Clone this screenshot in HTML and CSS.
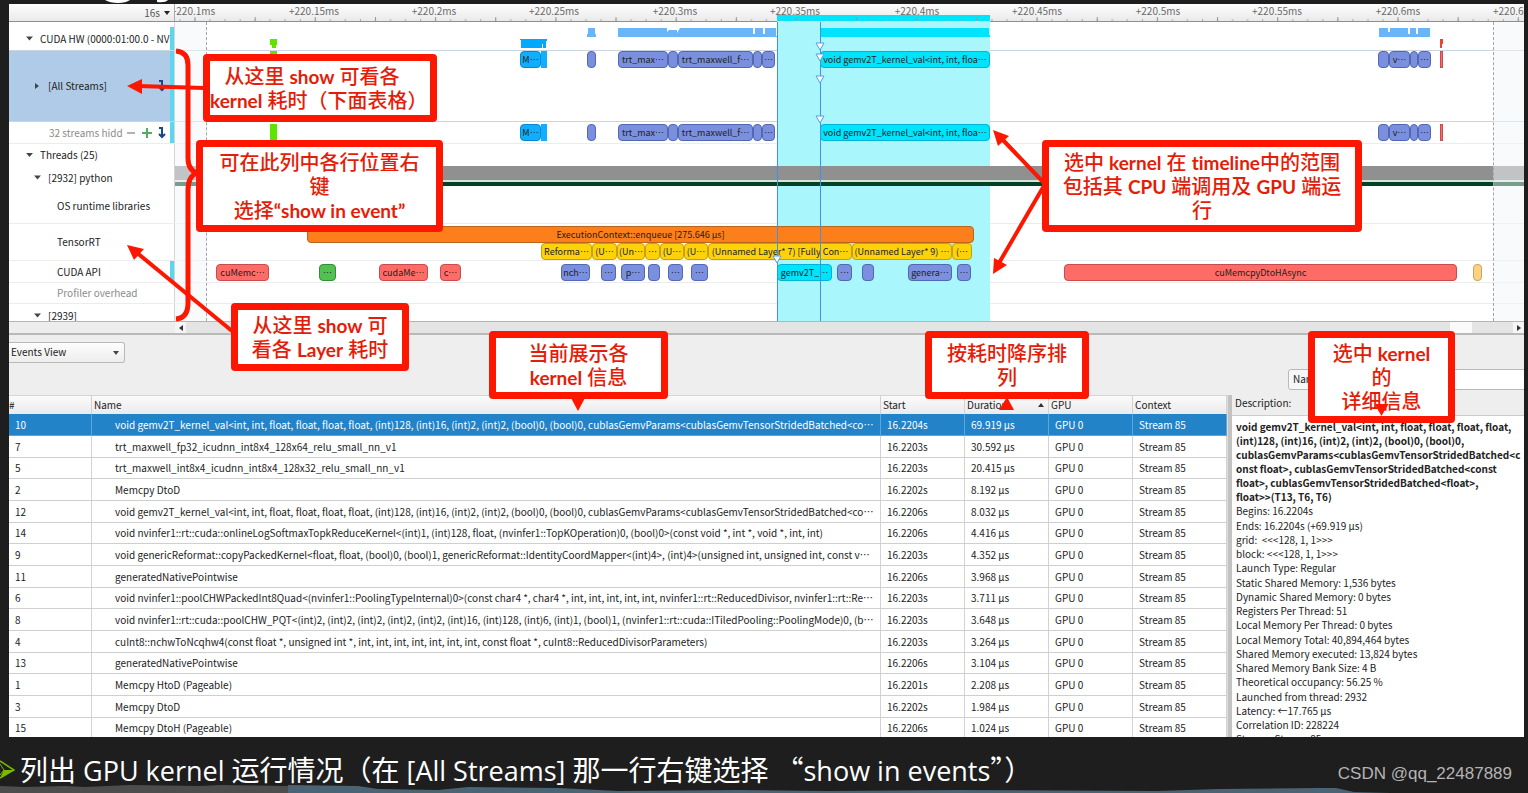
FILE: index.html
```html
<!DOCTYPE html>
<html lang="zh-CN">
<head>
<meta charset="utf-8">
<title>GPU kernel 运行情况</title>
<link rel="stylesheet" href="styles.css">
</head>
<body>
<main class="slide">
  <svg class="title-edge" viewBox="0 0 200 4" aria-hidden="true"><path d="M105 0h25q-4 3-12 3t-13-3zM157 0h11q-3 3-11 2z" fill="#fff"/></svg>

  <section class="app">
    <div class="timeline">
      <div class="row ruler">
        <div class="label"><button class="unit" type="button">16s <svg viewBox="0 0 6 4"><path d="M0 0h6L3 4z"/></svg></button></div>
        <div class="lane">
          <svg class="ticks" viewBox="0 0 1349 5" preserveAspectRatio="none" aria-hidden="true">
            <defs>
              <pattern id="tick" x="4.5" width="60.15" height="5" patternUnits="userSpaceOnUse"><path d="M15.5 3v2M30.5 3v2M45.5 3v2M.5 3v2" stroke="#aaa"/></pattern>
              <pattern id="major" x="19.5" width="60.15" height="5" patternUnits="userSpaceOnUse"><path d="M.5 1v4" stroke="#999"/></pattern>
            </defs>
            <rect width="1349" height="5" fill="url(#tick)"/><rect width="1349" height="5" fill="url(#major)"/>
          </svg>
          <span style="--x:18">+220.1ms</span><span style="--x:139">+220.15ms</span><span style="--x:259">+220.2ms</span><span style="--x:379">+220.25ms</span><span style="--x:500">+220.3ms</span><span style="--x:620">+220.35ms</span><span style="--x:742">+220.4ms</span><span style="--x:862">+220.45ms</span><span style="--x:983">+220.5ms</span><span style="--x:1102">+220.55ms</span><span style="--x:1223">+220.6ms</span><span style="--x:1343">+220.65ms</span>
        </div>
      </div>
      <div class="row sliver"><div class="label"></div><div class="lane"></div></div>
      <div class="row hw">
        <div class="label d1 strip"><i class="tri open"></i><span>CUDA HW (0000:01:00.0 - NV</span></div>
        <div class="lane">
          <svg class="minis" viewBox="0 0 1349 23" preserveAspectRatio="none" aria-hidden="true">
            <path d="M95 12h7v6h-1v3h-4v-3h-2z" fill="#5fe400"/>
            <path d="M345 12h27v2h-1v7h-3v-4h-1v4h-21v-8h-1z" fill="#00a8ff"/>
            <path d="M413 1h7v6h1v3h-9v-3h1zM443 1h49v4l2-2h8v3l3-5h73v6h2V1h8v6h2V1h11v8h1v1H443z" fill="#6ab4f8"/>
            <path d="M646 1h168v7h1v2H646z" fill="#00e3fc"/>
            <path d="M1204 1h9v4h2V1h18v6h2V1h6v6h2V1h12v9h-51z" fill="#6ab4f8"/>
            <path d="M1265 12h3v5h-1v4h-2z" fill="#ef4136"/>
          </svg>
        </div>
      </div>
      <div class="row streams selected">
        <div class="label d2 strip"><i class="tri"></i><span>[All Streams]</span><svg class="jump" viewBox="0 0 8 12"><path d="M1 1h3v9M1 7l3 3 3-3" /></svg></div>
        <div class="lane">
          <b class="bar green flat" style="--x:95;--w:7"></b>
          <b class="bar sky" style="--x:345;--w:21">M…</b><b class="bar sky flat" style="--x:366;--w:6"></b>
          <b class="bar blue" style="--x:412;--w:9"></b><b class="bar blue" style="--x:443;--w:50">trt_max…</b><b class="bar blue" style="--x:493;--w:10"></b><b class="bar blue" style="--x:503;--w:75">trt_maxwell_f…</b><b class="bar blue" style="--x:578;--w:9"></b><b class="bar blue" style="--x:587;--w:13">…</b>
          <b class="bar cyan" style="--x:645;--w:170">void gemv2T_kernel_val&lt;int, int, floa…</b>
          <b class="bar blue" style="--x:1203;--w:11"></b><b class="bar blue" style="--x:1214;--w:21">v…</b><b class="bar blue" style="--x:1235;--w:8"></b><b class="bar blue" style="--x:1243;--w:13">…</b><b class="bar red flat" style="--x:1265;--w:3"></b>
        </div>
      </div>
      <div class="row hidden-streams">
        <div class="label d2 strip muted"><span class="nomark">32 streams hidd</span><svg class="pm" viewBox="0 0 26 10"><path d="M0 5h8" stroke="#999" stroke-width="1.5"/><path d="M15 5h10M20 0v10" stroke="#4fae63" stroke-width="2"/></svg><svg class="jump" viewBox="0 0 8 12"><path d="M1 1h3v9M1 7l3 3 3-3" /></svg></div>
        <div class="lane">
          <b class="bar green flat" style="--x:95;--w:7"></b>
          <b class="bar sky" style="--x:345;--w:21">M…</b><b class="bar sky flat" style="--x:366;--w:6"></b>
          <b class="bar blue" style="--x:412;--w:9"></b><b class="bar blue" style="--x:443;--w:50">trt_max…</b><b class="bar blue" style="--x:493;--w:10"></b><b class="bar blue" style="--x:503;--w:75">trt_maxwell_f…</b><b class="bar blue" style="--x:578;--w:9"></b><b class="bar blue" style="--x:587;--w:13">…</b>
          <b class="bar cyan" style="--x:645;--w:170">void gemv2T_kernel_val&lt;int, int, floa…</b>
          <b class="bar blue" style="--x:1203;--w:11"></b><b class="bar blue" style="--x:1214;--w:21">v…</b><b class="bar blue" style="--x:1235;--w:8"></b><b class="bar blue" style="--x:1243;--w:13">…</b><b class="bar red flat" style="--x:1265;--w:3"></b>
        </div>
      </div>
      <div class="row threads"><div class="label d1"><i class="tri open"></i><span>Threads (25)</span></div><div class="lane"></div></div>
      <div class="row python"><div class="label d2"><i class="tri open"></i><span>[2932] python</span></div><div class="lane"></div></div>
      <div class="row osrt"><div class="label d3"><span>OS runtime libraries</span></div><div class="lane"></div></div>
      <div class="row trt">
        <div class="label d3"><span>TensorRT</span></div>
        <div class="lane">
          <b class="bar orange" style="--x:132;--w:667">ExecutionContext::enqueue [275.646 µs]</b>
          <b class="bar yellow" style="--x:366;--w:51">Reforma…</b><b class="bar yellow" style="--x:417;--w:25">(U…</b><b class="bar yellow" style="--x:442;--w:28">(Un…</b><b class="bar yellow" style="--x:470;--w:15">…</b><b class="bar yellow" style="--x:485;--w:24">(U…</b><b class="bar yellow" style="--x:509;--w:24">(U…</b><b class="bar yellow" style="--x:533;--w:144">(Unnamed Layer* 7) [Fully Con…</b><b class="bar yellow" style="--x:677;--w:100">(Unnamed Layer* 9) …</b><b class="bar yellow" style="--x:777;--w:20">(…</b>
        </div>
      </div>
      <div class="row api">
        <div class="label d3 strip"><span>CUDA API</span></div>
        <div class="lane">
          <b class="bar red" style="--x:41;--w:53">cuMemc…</b><b class="bar leaf" style="--x:144;--w:17">…</b><b class="bar red" style="--x:204;--w:49">cudaMe…</b><b class="bar red" style="--x:265;--w:21">c…</b>
          <b class="bar blue" style="--x:386;--w:29">nch…</b><b class="bar blue" style="--x:426;--w:15">…</b><b class="bar blue" style="--x:446;--w:24">p…</b><b class="bar blue" style="--x:473;--w:12"></b><b class="bar blue" style="--x:493;--w:15">…</b><b class="bar blue" style="--x:516;--w:17">…</b>
          <b class="bar cyan" style="--x:602;--w:55">gemv2T_…</b><b class="bar blue" style="--x:662;--w:15">…</b><b class="bar blue" style="--x:687;--w:12"></b><b class="bar blue" style="--x:733;--w:44">genera…</b><b class="bar blue" style="--x:782;--w:14">…</b>
          <b class="bar red" style="--x:889;--w:393">cuMemcpyDtoHAsync</b><b class="bar tan" style="--x:1298;--w:9"></b>
        </div>
      </div>
      <div class="row prof"><div class="label d3 muted"><span>Profiler overhead</span></div><div class="lane"></div></div>
      <div class="row last"><div class="label d2"><i class="tri open"></i><span>[2939]</span></div><div class="lane"></div></div>

      <div class="selection" aria-hidden="true"><div class="band"></div></div>
      <div class="cursors" aria-hidden="true">
        <div class="shade left"></div><div class="shade right"></div>
        <div class="cursor" style="--x:602"><svg style="--y:233" viewBox="0 0 10 9"><path d="M1 1h8L5 8z"/></svg></div>
        <div class="cursor" style="--x:645"><svg style="--y:20" viewBox="0 0 10 9"><path d="M1 1h8L5 8z"/></svg><svg style="--y:31" viewBox="0 0 10 9"><path d="M1 1h8L5 8z"/></svg><svg style="--y:53" viewBox="0 0 10 9"><path d="M1 1h8L5 8z"/></svg><svg style="--y:93" viewBox="0 0 10 9"><path d="M1 1h8L5 8z"/></svg></div>
      </div>
    </div>

    <div class="hscroll" aria-hidden="true"><span class="gap"></span><span class="arrow"><svg viewBox="0 0 4 6"><path d="M4 0v6L0 3z"/></svg></span><span class="track"></span><span class="thumb"></span><span class="rest"></span><span class="arrow"><svg viewBox="0 0 4 6"><path d="M0 0v6l4-3z"/></svg></span></div>

    <div class="toolbar">
      <div class="pick"><select aria-label="View"><option>Events View</option></select><svg viewBox="0 0 6 4"><path d="M0 0h6L3 4z"/></svg></div>
      <div class="search"><select aria-label="Search column"><option>Name</option></select><input type="text" aria-label="Search text"></div>
    </div>

    <div class="events">
      <div class="grid">
        <table>
          <colgroup><col class="c-num"><col><col class="c-val"><col class="c-val"><col class="c-val"><col class="c-ctx"></colgroup>
          <thead><tr><th>#</th><th>Name</th><th>Start</th><th class="sorted">Duration<svg viewBox="0 0 6 4"><path d="M0 4h6L3 0z"/></svg></th><th>GPU</th><th>Context</th></tr></thead>
          <tbody>
            <tr class="on"><td>10</td><td>void gemv2T_kernel_val&lt;int, int, float, float, float, float, (int)128, (int)16, (int)2, (int)2, (bool)0, (bool)0, cublasGemvParams&lt;cublasGemvTensorStridedBatched&lt;co…</td><td>16.2204s</td><td>69.919 µs</td><td>GPU 0</td><td>Stream 85</td></tr>
            <tr><td>7</td><td>trt_maxwell_fp32_icudnn_int8x4_128x64_relu_small_nn_v1</td><td>16.2203s</td><td>30.592 µs</td><td>GPU 0</td><td>Stream 85</td></tr>
            <tr><td>5</td><td>trt_maxwell_int8x4_icudnn_int8x4_128x32_relu_small_nn_v1</td><td>16.2203s</td><td>20.415 µs</td><td>GPU 0</td><td>Stream 85</td></tr>
            <tr><td>2</td><td>Memcpy DtoD</td><td>16.2202s</td><td>8.192 µs</td><td>GPU 0</td><td>Stream 85</td></tr>
            <tr><td>12</td><td>void gemv2T_kernel_val&lt;int, int, float, float, float, float, (int)128, (int)16, (int)2, (int)2, (bool)0, (bool)0, cublasGemvParams&lt;cublasGemvTensorStridedBatched&lt;co…</td><td>16.2206s</td><td>8.032 µs</td><td>GPU 0</td><td>Stream 85</td></tr>
            <tr><td>14</td><td>void nvinfer1::rt::cuda::onlineLogSoftmaxTopkReduceKernel&lt;(int)1, (int)128, float, (nvinfer1::TopKOperation)0, (bool)0&gt;(const void *, int *, void *, int, int)</td><td>16.2206s</td><td>4.416 µs</td><td>GPU 0</td><td>Stream 85</td></tr>
            <tr><td>9</td><td>void genericReformat::copyPackedKernel&lt;float, float, (bool)0, (bool)1, genericReformat::IdentityCoordMapper&lt;(int)4&gt;, (int)4&gt;(unsigned int, unsigned int, const v…</td><td>16.2203s</td><td>4.352 µs</td><td>GPU 0</td><td>Stream 85</td></tr>
            <tr><td>11</td><td>generatedNativePointwise</td><td>16.2206s</td><td>3.968 µs</td><td>GPU 0</td><td>Stream 85</td></tr>
            <tr><td>6</td><td>void nvinfer1::poolCHWPackedInt8Quad&lt;(nvinfer1::PoolingTypeInternal)0&gt;(const char4 *, char4 *, int, int, int, int, int, nvinfer1::rt::ReducedDivisor, nvinfer1::rt::Re…</td><td>16.2203s</td><td>3.711 µs</td><td>GPU 0</td><td>Stream 85</td></tr>
            <tr><td>8</td><td>void nvinfer1::rt::cuda::poolCHW_PQT&lt;(int)2, (int)2, (int)2, (int)2, (int)2, (int)16, (int)128, (int)6, (int)1, (bool)1, (nvinfer1::rt::cuda::ITiledPooling::PoolingMode)0, (b…</td><td>16.2203s</td><td>3.648 µs</td><td>GPU 0</td><td>Stream 85</td></tr>
            <tr><td>4</td><td>cuInt8::nchwToNcqhw4(const float *, unsigned int *, int, int, int, int, int, int, int, const float *, cuInt8::ReducedDivisorParameters)</td><td>16.2203s</td><td>3.264 µs</td><td>GPU 0</td><td>Stream 85</td></tr>
            <tr><td>13</td><td>generatedNativePointwise</td><td>16.2206s</td><td>3.104 µs</td><td>GPU 0</td><td>Stream 85</td></tr>
            <tr><td>1</td><td>Memcpy HtoD (Pageable)</td><td>16.2201s</td><td>2.208 µs</td><td>GPU 0</td><td>Stream 85</td></tr>
            <tr><td>3</td><td>Memcpy DtoD</td><td>16.2202s</td><td>1.984 µs</td><td>GPU 0</td><td>Stream 85</td></tr>
            <tr><td>15</td><td>Memcpy DtoH (Pageable)</td><td>16.2206s</td><td>1.024 µs</td><td>GPU 0</td><td>Stream 85</td></tr>
          </tbody>
        </table>
      </div>
      <aside class="detail">
        <h2>Description:</h2>
        <div class="text">
          <p>void gemv2T_kernel_val&lt;int, int, float, float, float, float,<br>(int)128, (int)16, (int)2, (int)2, (bool)0, (bool)0,<br>cublasGemvParams&lt;cublasGemvTensorStridedBatched&lt;c<br>onst float&gt;, cublasGemvTensorStridedBatched&lt;const<br>float&gt;, cublasGemvTensorStridedBatched&lt;float&gt;,<br>float&gt;&gt;(T13, T6, T6)</p>
          <ul>
            <li>Begins: 16.2204s</li><li>Ends: 16.2204s (+69.919 µs)</li><li>grid:&nbsp; &lt;&lt;&lt;128, 1, 1&gt;&gt;&gt;</li><li>block: &lt;&lt;&lt;128, 1, 1&gt;&gt;&gt;</li><li>Launch Type: Regular</li><li>Static Shared Memory: 1,536 bytes</li><li>Dynamic Shared Memory: 0 bytes</li><li>Registers Per Thread: 51</li><li>Local Memory Per Thread: 0 bytes</li><li>Local Memory Total: 40,894,464 bytes</li><li>Shared Memory executed: 13,824 bytes</li><li>Shared Memory Bank Size: 4 B</li><li>Theoretical occupancy: 56.25 %</li><li>Launched from thread: 2932</li><li>Latency: ←17.765 µs</li><li>Correlation ID: 228224</li><li>Stream: Stream 85</li>
          </ul>
        </div>
      </aside>
    </div>
  </section>

  <footer class="caption">
    <svg class="bullet" viewBox="0 0 15 20" aria-hidden="true"><path d="M0 1l14 9L0 18" fill="#1e1e1e" stroke="#76b900" stroke-width="1.5"/><path d="M0 18l14-8H4z" fill="#76b900"/><path d="M0 4l4 6-4 5" fill="none" stroke="#76b900"/></svg>
    <p>列出<span class="latin"> GPU kernel </span>运行情况（在<span class="latin"> [All Streams] </span>那一行右键选择<span class="latin"> </span>“<span class="latin">show in events</span>”）</p>
    <span class="credit">CSDN @qq_22487889</span>
    <svg class="wave" viewBox="0 0 1528 10" preserveAspectRatio="none" aria-hidden="true"><path d="M0 3l25 1 40-1 20 1 45-2 70 1 20-1 68 1v7H0z" fill="#4d4d4e"/><path d="M288 2l70 1 20 3 60 1 30-3 90 1 60 3 120-1 90 1 130-1 200 1 60-2 100-1h18l18 4 36 1v1H288z" fill="#4a6474"/></svg>
  </footer>

  <svg class="marks" viewBox="0 0 1528 793" preserveAspectRatio="none" aria-hidden="true">
    <g fill="none" stroke="#fd1700" stroke-width="5">
      <path d="M176 51q12 1 12 14v93q0 12 9 15q-9 3-9 17v113q0 15-12 16"/>
      <path d="M204 88l-66-2" stroke-width="4"/><path d="M232 331L136 252" stroke-width="4"/><path d="M1045 184l-43-45M1045 184l-46 79" stroke-width="4"/>
    </g>
    <g fill="#fd1700">
      <path d="M127 86l15-7v15zM127 245l17 4-10 11zM993 130l16 6-11 10zM993 274l1-16 13 7z"/>
      <path d="M571 398h14l-7 13zM999 410h15l-7-13z"/>
    </g>
  </svg>
  <div class="note lead" style="--x:203;--w:234;--y:54">从这里 <b>show</b> 可看各<br><b>kernel</b> 耗时（下面表格）</div>
  <div class="note" style="--x:196;--w:247;--y:140">可在此列中各行位置右<br>键<br>选择<b>“show in event”</b></div>
  <div class="note" style="--x:231;--w:178;--y:303">从这里 <b>show</b> 可<br>看各 <b>Layer</b> 耗时</div>
  <div class="note" style="--x:489;--w:179;--y:331">当前展示各<br><b>kernel</b> 信息</div>
  <div class="note" style="--x:925;--w:164;--y:331">按耗时降序排<br>列</div>
  <div class="note pointer" style="--x:1308;--w:147;--y:331">选中 <b>kernel</b><br>的<br>详细信息</div>
  <div class="note" style="--x:1042;--w:320;--y:140">选中 <b>kernel</b> 在 <b>timeline</b>中的范围<br>包括其 <b>CPU</b> 端调用及 <b>GPU</b> 端运<br>行</div>
</main>
</body>
</html>
```
FILE: styles.css
```css
* { box-sizing: border-box; }
body { margin: 0; background: #1e1e1e; color: #222; font: 10px/14px "Noto Sans CJK SC", sans-serif; }
button, select, input { font: inherit; color: inherit; }
h2, p, ul { margin: 0; padding: 0; }

.slide { position: relative; height: 100vh; padding: 4px 4px 0 9px; display: flex; flex-direction: column; overflow: hidden; }
.title-edge { position: absolute; left: 0; top: 0; width: 200px; height: 4px; }
.app { flex: 1; min-height: 0; display: flex; flex-direction: column; background: #eeeeee; overflow: hidden; }

/* timeline */
.timeline { position: relative; flex: none; background: #fff; border-bottom: 1px solid #b5b5b5; overflow: hidden; }
.row { display: flex; }
.label { width: 166px; flex: none; position: relative; display: flex; align-items: center; border-right: 1px solid #d5d5d5; overflow: hidden; white-space: nowrap; }
.lane { flex: 1; position: relative; z-index: 1; }
.d1 { padding-left: 16px; }
.d2 { padding-left: 24px; }
.d3 { padding-left: 48px; }
.label .nomark { margin-left: 16px; }
.muted { color: #8b8b8b; }
.strip::after { content: ""; position: absolute; right: 0; top: 0; bottom: 0; width: 4px; background: #5ad7ee; }
.tri { flex: none; width: 9px; height: 8px; margin-right: 6px; background: #444; clip-path: polygon(22% 12%, 67% 50%, 22% 88%); }
.tri.open { clip-path: polygon(12% 25%, 88% 25%, 50% 75%); }
.jump { position: absolute; right: 8px; width: 8px; height: 12px; fill: none; stroke: #164a86; stroke-width: 2; }
.pm { width: 26px; height: 10px; margin-left: 4px; }

.ruler { height: 18px; background: linear-gradient(#fdfdfd, #eaeaea); border-bottom: 1px solid #8e8e8e; }
.ruler .label { justify-content: flex-end; padding: 0 4px 0 0; border-color: #aaa; }
.ruler .lane { overflow: hidden; color: #6a6a6a; }
.ruler .lane span { position: absolute; top: 0; left: calc(var(--x) * 100% / 1349); transform: translateX(-50%); }
.ticks { position: absolute; left: 0; bottom: 0; width: 100%; height: 5px; }
.unit { display: flex; align-items: center; gap: 4px; padding: 0; border: 0; background: none; color: #555; }
.unit svg { width: 6px; height: 4px; fill: #222; }
.sliver { height: 5px; }
.hw { height: 24px; border-bottom: 1px solid #c9d6e2; }
.streams { height: 71px; border-bottom: 1px solid #c9d6e2; }
.hidden-streams { height: 22px; border-bottom: 1px solid #ececec; }
.threads { height: 22px; }
.python { height: 23px; }
.osrt { height: 35px; border-bottom: 1px solid #ececec; }
.trt { height: 37px; border-bottom: 1px solid #ececec; }
.api { height: 22px; border-bottom: 1px solid #ececec; }
.prof { height: 21px; border-bottom: 1px solid #ececec; }
.last { height: 17px; }
.last .label { height: 23px; }
.selected .label { background: #b0cbe7; }
.python .lane { background: linear-gradient(#909090 14px, #d8e4d8 14px 16px, #004225 16px 20px, transparent 20px); }
.minis { width: 100%; height: 23px; display: block; }

.bar { position: absolute; top: 0; left: calc(var(--x) * 100% / 1349); width: calc(var(--w) * 100% / 1349); height: 17px; border: 1px solid; border-radius: 4px; color: #222; font-size: 9px; font-weight: 400; line-height: 15px; text-align: center; white-space: nowrap; overflow: hidden; }
.bar.flat { border-radius: 0; }
.hidden-streams .bar { top: 2px; }
.api .bar { top: 3px; }
.trt .bar { top: 19px; }
.trt .orange { top: 2px; }
.bar.green { background: #5fe400; border-color: #5fe400; }
.bar.sky { background: #10aefb; border-color: #0a86d4; }
.bar.sky.flat { border-color: #10aefb; }
.bar.blue { background: #7a90de; border-color: #5268b4; }
.bar.cyan { background: #00e3fc; border-color: #00b4d4; }
.bar.red { background: #ff6b67; border-color: #c84c4c; }
.bar.leaf { background: #52c152; border-color: #348f34; }
.bar.orange { background: #fd7f1b; border-color: #b9651c; }
.bar.yellow { background: #fdd20a; border-color: #c9a20b; }
.bar.tan { background: #fbd284; border-color: #c9a560; }

.selection, .cursors { position: absolute; left: 166px; right: 0; top: 11px; bottom: 0; }
.cursors { z-index: 2; top: 18px; }
.band { position: absolute; left: calc(602 * 100% / 1349); width: calc(213 * 100% / 1349); top: 0; bottom: 0; background: linear-gradient(#00e5fb 6px, #a9f6fd 6px); }
.shade { position: absolute; top: 0; bottom: 0; background: rgba(244, 245, 247, .5); }
.shade.left { left: 0; width: calc(32 * 100% / 1349); border-right: 1px dashed #a5a5a5; }
.shade.right { right: 0; width: calc(31 * 100% / 1349); border-left: 1px dashed #a5a5a5; }
.cursor { position: absolute; top: 0; bottom: 0; left: calc(var(--x) * 100% / 1349); width: 1px; background: #3f93e6; }
.cursor svg { position: absolute; left: -5px; top: calc(var(--y) * 1px); width: 10px; height: 9px; fill: #fff; stroke: #5a9be0; }

.hscroll { display: flex; height: 13px; flex: none; background: #e4e4e4; border-bottom: 2px solid #b9b9b9; }
.hscroll .gap { width: 166px; background: #ededed; }
.hscroll .arrow { width: 11px; display: flex; align-items: center; justify-content: center; background: #f5f5f5; }
.hscroll .arrow svg { width: 4px; height: 6px; fill: #333; }
.hscroll .track { flex: 1; }
.hscroll .thumb { width: 22px; background: #fafafa; }
.hscroll .rest { width: 41px; }

/* toolbar */
.toolbar { flex: none; height: 60px; padding-top: 7px; display: flex; flex-direction: column; gap: 6px; }
.pick { position: relative; width: 116px; height: 21px; }
.pick select { appearance: none; width: 100%; height: 100%; padding: 0 2px 2px; border: 1px solid #b9b9b9; border-left: 0; border-radius: 0 3px 3px 0; background: linear-gradient(#fdfdfd, #ededed); }
.pick svg { position: absolute; right: 6px; top: 9px; width: 6px; height: 4px; fill: #444; }
.search { align-self: flex-end; display: flex; width: 236px; height: 21px; }
.search select { appearance: none; width: 80px; padding: 0 4px 2px; border: 1px solid #b9b9b9; border-radius: 3px; background: #f7f7f7; }
.search input { flex: 1; min-width: 0; border: 1px solid #b9b9b9; border-right: 0; background: #fff; }

/* events */
.events { flex: 1; display: flex; min-height: 0; }
.grid { flex: 1; min-width: 0; overflow: hidden; background: #fff; border-right: 1px solid #ddd; }
table { width: 100%; table-layout: fixed; border-collapse: separate; border-spacing: 0; }
.c-num { width: 83px; }
.c-val { width: 84px; }
.c-ctx { width: 94px; }
th { position: relative; height: 19px; padding: 0 2px; font-weight: 400; text-align: left; background: linear-gradient(#fafafa, #ebebeb); border-top: 1px solid #d5d5d5; border-right: 1px solid #d2d2d2; }
th:first-child { padding-left: 0; }
th svg { position: absolute; right: 4px; top: 7px; width: 6px; height: 4px; fill: #333; }
td { height: 22px; padding: 0 6px; border-bottom: 1px solid #cfcfcf; border-right: 1px solid #d2d2d2; white-space: nowrap; overflow: hidden; text-overflow: ellipsis; }
tr:nth-child(3n) td { height: 21px; }
td:nth-child(2) { padding-left: 23px; }
.on td { background: #2383c9; color: #fff; border-color: #5ca6dc; }

.detail { width: 296px; flex: none; display: flex; flex-direction: column; border-left: 4px solid #c2c2c2; }
.detail h2 { flex: none; height: 20px; padding: 1px 3px; font-size: 10px; font-weight: 400; }
.detail .text { flex: 1; min-height: 0; overflow: hidden; padding: 4px 0 0 4px; background: #fff; border-top: 1px solid #ccc; white-space: nowrap; }
.detail p { font-weight: 700; color: #222; }
.detail li { height: 14px; list-style: none; }
.detail li:nth-child(4n+1) { height: 15px; }

/* caption */
.caption { position: relative; height: 56px; margin: 0 -4px 0 -9px; flex: none; display: flex; align-items: center; padding: 10px 16px 0 0; color: #fff; }
.bullet { width: 15px; height: 20px; margin-right: 5px; }
.caption p { position: relative; z-index: 1; flex: 1; font: 28px/36px "Noto Sans CJK SC", sans-serif; white-space: nowrap; }
.caption .latin { font-family: "Open Sans", sans-serif; font-size: 27px; }
.credit { position: relative; z-index: 1; padding-top: 8px; font: 17px/20px "Liberation Sans", sans-serif; color: #b4b4b4; }
.wave { position: absolute; left: 0; bottom: 0; width: 100%; height: 10px; }

/* annotations */
.marks { position: absolute; left: 0; top: 0; width: 100%; height: 100%; z-index: 3; }
.note { position: absolute; z-index: 4; left: calc(var(--x) * 100% / 1528); width: calc(var(--w) * 100% / 1528); top: calc(var(--y) * 1px); padding: 3px 0; border: 7px solid #fd1700; border-radius: 4px; background: #fff; color: #e51c08; font: 500 20px/24px Lato, "Noto Sans CJK SC", sans-serif; font-variant-ligatures: none; text-align: center; white-space: nowrap; }
.note b { font-weight: 700; font-size: 19px; line-height: 20px; }
.note.lead { padding-right: 16px; }
.pointer::after { content: ""; position: absolute; left: 50%; bottom: 0; width: 14px; height: 12px; margin-left: -7px; background: #fd1700; clip-path: polygon(0 0, 100% 0, 50% 100%); }
```
